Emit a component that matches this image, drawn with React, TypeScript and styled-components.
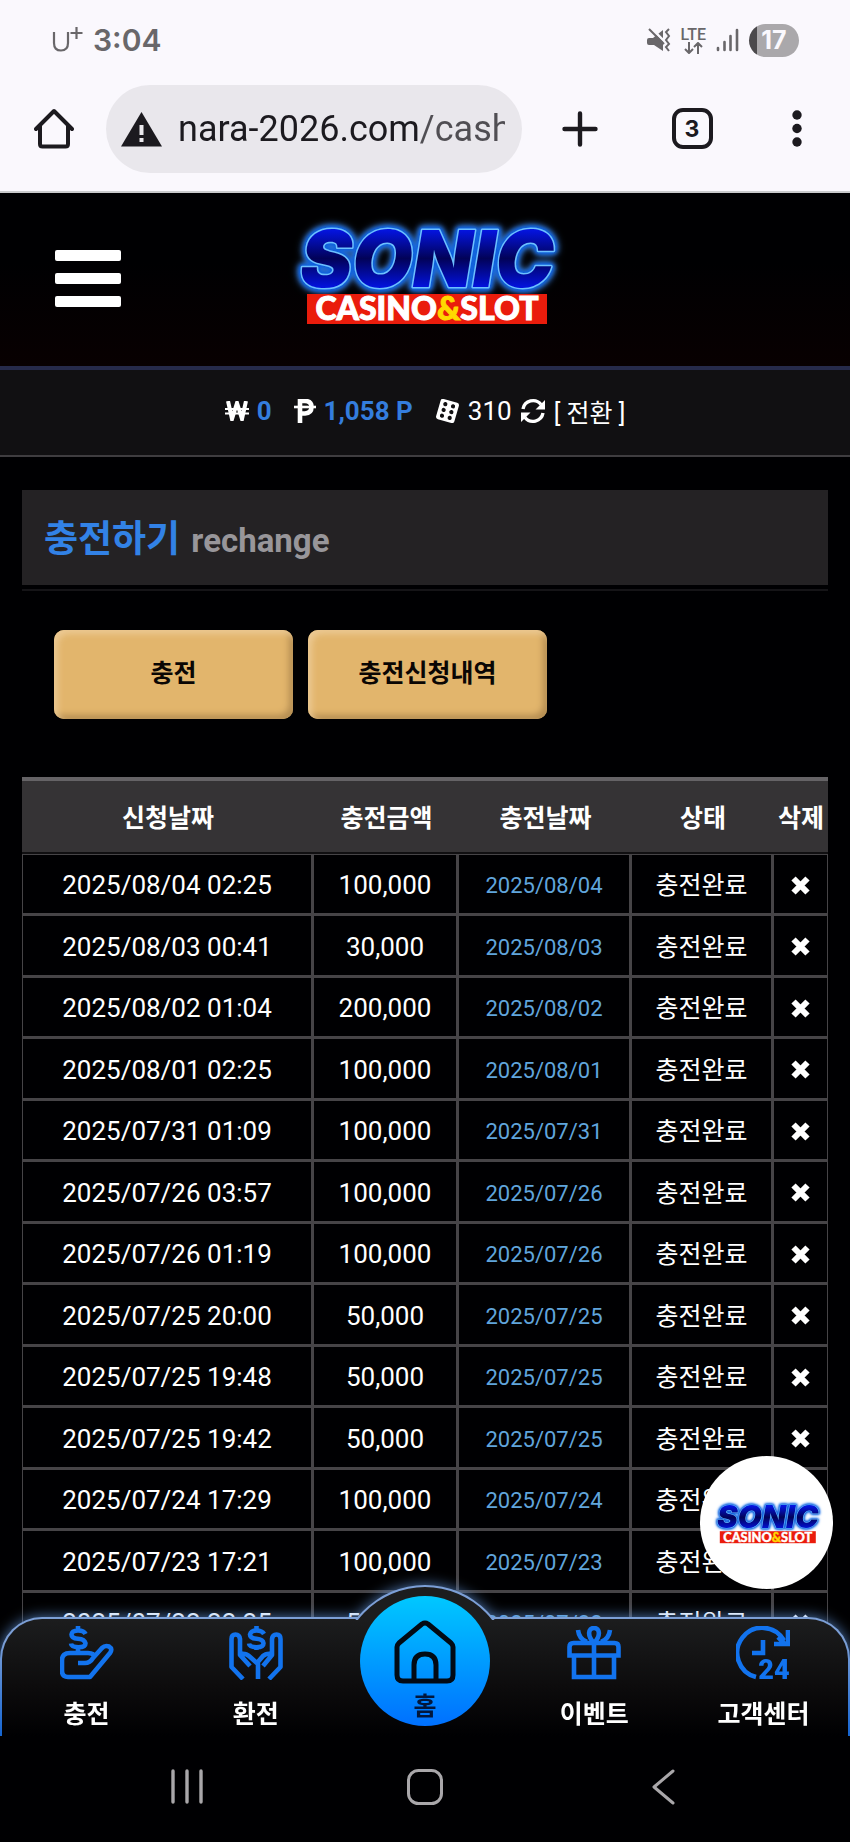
import React from "react";
import styled, { createGlobalStyle } from "styled-components";

const GlobalStyle = createGlobalStyle`
  * { box-sizing: border-box; }
  body {
    margin: 0;
    background: #000002;
    color: #fff;
    font-family: Roboto, "Noto Sans CJK KR", sans-serif;
  }
  button {
    border: 0;
    padding: 0;
    background: none;
    color: inherit;
    font-family: inherit;
    cursor: pointer;
  }
  a { color: inherit; text-decoration: none; }
  svg { display: block; }
`;

const Screen = styled.div`
  display: grid;
  grid-template-columns: minmax(0, 1fr);
  grid-template-rows: auto minmax(0, 1fr) auto;
  height: 100vh;
`;

/* Browser chrome */

const BrowserTop = styled.header`
  background: #faf8fd;
  border-bottom: 2px solid #c9cacc;
`;

const StatusBar = styled.div`
  display: flex;
  align-items: center;
  justify-content: space-between;
  height: 80px;
  padding: 0 51px 0 52px;
  color: #69676a;
`;

const StatusGroup = styled.div`
  display: flex;
  align-items: center;
  gap: 10px;
`;

const Clock = styled.span`
  font: 600 30px/36px Inter, sans-serif;
`;

const Network = styled.span`
  display: grid;
  justify-items: center;
  font: 500 16px/15px Roboto, sans-serif;
`;

const Battery = styled.span`
  width: 50px;
  height: 33px;
  border-radius: 17px;
  background: linear-gradient(90deg, #4b494c 8px, #aaa8ab 8px);
  color: #faf8fd;
  font: 700 25px/33px Inter, sans-serif;
  text-align: center;
`;

const Toolbar = styled.div`
  display: flex;
  align-items: center;
  height: 111px;
  padding: 0 26px 14px 34px;
  color: #1c1a1f;
`;

const AddressBar = styled.label`
  display: flex;
  flex: 1;
  align-items: center;
  gap: 16px;
  min-width: 0;
  height: 88px;
  margin: 0 40px 0 32px;
  padding: 0 17px 0 15px;
  border-radius: 44px;
  background: #e9e7ec;
`;

const Address = styled.input`
  flex: 1;
  min-width: 0;
  padding: 0;
  border: 0;
  outline: 0;
  font: 400 36px/44px Roboto, sans-serif;
  background: linear-gradient(90deg, #1c1a1f 242px, #504e53 242px);
  background-clip: text;
  -webkit-text-fill-color: transparent;
`;

const ToolButtons = styled.div`
  display: flex;
  align-items: center;
  justify-content: space-between;
  width: 262px;
`;

const TabCount = styled.button`
  width: 41px;
  height: 41px;
  margin-left: 16px;
  border: 4px solid #1c1a1f;
  border-radius: 11px;
  font: 700 23px/32px Inter, sans-serif;
`;

const IconButton = styled.button`
  display: grid;
  place-items: center;
`;

const MoreButton = styled(IconButton)`
  padding: 0 22px;
`;

/* Site */

const Site = styled.div`
  position: relative;
  overflow: hidden;
`;

const SiteHeader = styled.div`
  display: grid;
  grid-template-columns: 1fr auto 1fr;
  align-items: center;
  height: 177px;
  padding: 0 55px;
  border-bottom: 4px solid #262a4a;
  background: linear-gradient(#000002 40%, #080001);
`;

const Burger = styled.button`
  display: grid;
  gap: 12px;
  width: 66px;
  margin-top: -2px;

  i {
    height: 11px;
    border-radius: 2px;
    background: #fff;
  }
`;

const LogoLink = styled.a`
  margin-top: -15px;
`;

const LogoName = styled.text<{ $glow: string }>`
  font: italic 900 78px Inter, sans-serif;
  fill: url(#logoFill);
  stroke: #6cc0ff;
  stroke-width: 3px;
  stroke-linejoin: round;
  paint-order: stroke;
  text-anchor: middle;
  filter: drop-shadow(0 0 1px #0d5fdc) drop-shadow(0 0 2px #0d5fdc)
    drop-shadow(0 0 2px #0d5fdc) drop-shadow(0 0 3px ${(p) => p.$glow});
`;

const LogoTag = styled.text`
  font: 900 32px Lato, sans-serif;
  fill: #fff;
  stroke: #fff;
  stroke-width: 1px;
  text-anchor: middle;

  tspan {
    fill: #ffd800;
    stroke: #ffd800;
  }
`;

const InfoBar = styled.div`
  display: flex;
  align-items: center;
  justify-content: center;
  gap: 22px;
  height: 87px;
  padding-bottom: 3px;
  border-bottom: 2px solid #3f3d40;
  background: #111012;
  font-size: 26px;
`;

const InfoItem = styled.span`
  display: flex;
  align-items: center;
  gap: 8px;

  b {
    color: #347ddd;
    font-weight: 700;
  }
  button {
    font-size: 25px;
  }
`;

const Content = styled.main`
  padding: 33px 22px 0;
`;

const TitleBox = styled.div`
  padding-bottom: 4px;
  border-bottom: 2px solid #151417;
`;

const Title = styled.h1`
  height: 95px;
  margin: 0;
  padding: 2px 22px 0;
  background: #242224;
  color: #3282e6;
  font-size: 37px;
  font-weight: 700;
  line-height: 95px;

  small {
    margin-left: 2px;
    color: #98969a;
    font-size: 33px;
    font-weight: 700;
  }
`;

const Actions = styled.div`
  display: flex;
  gap: 15px;
  padding: 39px 32px 58px;
`;

const GoldButton = styled.button`
  width: 239px;
  height: 89px;
  padding-bottom: 8px;
  border-radius: 10px;
  background: #e2b56c;
  box-shadow: inset 4px 4px 6px #ecc993, inset -4px -4px 6px #b48d52;
  color: #0a0604;
  font-size: 25px;
  font-weight: 700;
`;

const History = styled.table`
  width: 100%;
  table-layout: fixed;
  border-collapse: separate;
  border-spacing: 0;
  text-align: center;

  th {
    height: 78px;
    padding: 0 0 4px;
    border-top: 4px solid #656366;
    border-bottom: 1px solid #464447;
    background: linear-gradient(#353335 71px, #100f11 71px);
    font-size: 25px;
    font-weight: 700;
    white-space: nowrap;
  }
  td {
    height: 61px;
    padding: 2px 0 0;
    border-right: 3px solid #464447;
    border-bottom: 3px solid #464447;
    font-size: 26px;
    line-height: 32px;
    white-space: nowrap;
  }
  tr:nth-child(even) td { height: 62px; }
  td:first-child { border-left: 1px solid #464447; }
  td:last-child { border-right-width: 1px; }
`;

const Col = styled.col<{ $w?: number }>`
  width: ${(p) => (p.$w ? `${p.$w}px` : "auto")};
`;

const PaidDate = styled.td`
  && {
    padding-top: 4px;
    color: #60a5dc;
    font-size: 22px;
  }
`;

const State = styled.td`
  && {
    padding-top: 4px;
    font-size: 25px;
  }
`;

const DeleteButton = styled(IconButton)`
  margin: 0 auto;
`;

const Floating = styled.a`
  position: absolute;
  right: 17px;
  bottom: 147px;
  display: grid;
  place-items: center;
  width: 133px;
  height: 133px;
  border-radius: 50%;
  background: #fff;
`;

const Dock = styled.nav`
  position: absolute;
  left: 0;
  right: 0;
  bottom: 0;
  height: 119px;
  filter: drop-shadow(0 0 7px rgba(105, 160, 235, 0.75));
`;

const DockBar = styled.div`
  display: grid;
  grid-template-columns: repeat(5, 1fr);
  height: 119px;
  border: 2px solid transparent;
  border-bottom: 0;
  border-radius: 42px 42px 0 0;
  background:
    linear-gradient(#1c1d1e, #0c0b0c 60%, #000002) padding-box,
    linear-gradient(#7c9fd6 20%, #1565d2) border-box;
`;

const Hump = styled.div`
  position: absolute;
  left: 50%;
  top: -32px;
  width: 176px;
  height: 35px;
  margin-left: -88px;
  overflow: hidden;

  &::before {
    content: "";
    display: block;
    height: 176px;
    border: 2px solid #7c9fd6;
    border-radius: 50%;
    background: #1c1d1e;
  }
`;

const DockLink = styled.a`
  display: flex;
  flex-direction: column;
  align-items: center;
  gap: 18px;
  padding-top: 7px;
  color: #fff;
  font-size: 25px;
  font-weight: 700;
  line-height: 34px;
  white-space: nowrap;

  svg { color: #1273ee; }
`;

const HomeLink = styled.a`
  position: absolute;
  left: 50%;
  top: -21px;
  display: flex;
  flex-direction: column;
  align-items: center;
  gap: 6px;
  width: 130px;
  height: 130px;
  margin-left: -65px;
  padding-top: 24px;
  border-radius: 50%;
  background: linear-gradient(#00c8ff, #0070ff);
  color: #02173c;
  font-size: 25px;
  font-weight: 700;
  line-height: 34px;

  svg { color: #020a14; }
`;

const SystemNav = styled.div`
  display: grid;
  grid-template-columns: repeat(3, 1fr);
  place-items: center;
  height: 106px;
  padding: 0 8% 4px;
  background: #000002;
  color: #a9a7aa;
`;

/* Drawings */

const Logo = ({ width, glow }: { width: number; glow: string }) => (
  <svg width={width} viewBox="0 0 300 112" role="img" aria-label="SONIC CASINO&SLOT">
    <defs>
      <linearGradient id="logoFill" x1="0" y1="0" x2="0" y2="1">
        <stop offset="0.2" stopColor="#0414e0" />
        <stop offset="0.5" stopColor="#020258" />
        <stop offset="0.8" stopColor="#0212dc" />
      </linearGradient>
    </defs>
    <LogoName $glow={glow} x="152" y="71">SONIC</LogoName>
    <rect x="32" y="78" width="240" height="30" fill="#ea1c0c" />
    <LogoTag x="152" y="104">CASINO<tspan>&amp;</tspan>SLOT</LogoTag>
  </svg>
);

const stroke = {
  fill: "none",
  stroke: "currentColor",
  strokeLinejoin: "round" as const,
};

const HomeOutline = () => (
  <svg width="40" height="41" viewBox="0 0 40 41" {...stroke} strokeWidth="4">
    <path d="M2 21 20 3l18 18" strokeLinecap="round" />
    <path d="M6 18v18q0 2.500 2.500 2.500h23q2.500 0 2.500-2.500V18" />
  </svg>
);

const Warning = () => (
  <svg width="41" height="36" viewBox="0 0 41 36">
    <path d="M20.500 1 41 35.500H0z" fill="#1c1a1f" />
    <path d="M18.500 14h4v10h-4zM18.500 27h4v4h-4z" fill="#e9e7ec" />
  </svg>
);

const Muted = () => (
  <svg width="24" height="24" viewBox="0 0 24 24">
    <path d="M0 12q0-2 2-2h4l10-8v21l-9-6H2q-2 0-2-2z" fill="currentColor" />
    <path d="M4 0l18 18" fill="none" stroke="#faf8fd" strokeWidth="2.500" />
    <path d="M2 1l15 15M22 1l-3 3 3 4-3 4 3 4-3 3 3 4" fill="none" stroke="currentColor" strokeWidth="2" />
  </svg>
);

const DataArrows = () => (
  <svg width="20" height="12" viewBox="0 0 20 12" {...stroke} strokeWidth="2">
    <path d="M6 0v11M2 7l4 4 4-4M15 12V1M11 5l4-4 4 4" />
  </svg>
);

const Signal = () => (
  <svg width="23" height="24" viewBox="0 0 23 24" {...stroke} strokeWidth="2.600" strokeLinecap="round">
    <path d="M2 20v2M8.500 14v8M14.500 8v14M21 2v20" />
  </svg>
);

const Plus = () => (
  <svg width="36" height="36" viewBox="0 0 36 36" {...stroke} strokeWidth="4.400" strokeLinecap="round">
    <path d="M18 2.500v31M2.500 18h31" />
  </svg>
);

const Dots = () => (
  <svg width="10" height="37" viewBox="0 0 10 37" fill="currentColor">
    <circle cx="5" cy="5" r="4.700" />
    <circle cx="5" cy="18.500" r="4.700" />
    <circle cx="5" cy="32" r="4.700" />
  </svg>
);

const Won = () => (
  <svg width="24" height="20" viewBox="0 0 24 20" {...stroke} strokeWidth="4" strokeLinejoin="miter">
    <path d="m3 0 4 18L12 2l5 16 4-18" />
    <path d="M0 8h24M0 12.500h24" strokeWidth="1.800" />
  </svg>
);

const Point = () => (
  <svg width="22" height="24" viewBox="0 0 22 24" {...stroke}>
    <path d="M6 24V2h5q6.500 0 6.500 6T11 14.500H6" strokeWidth="4.600" strokeLinejoin="miter" />
    <path d="M0 8h22" strokeWidth="2.600" />
  </svg>
);

const Dice = () => (
  <svg width="25" height="24" viewBox="0 0 25 24">
    <g transform="rotate(16 12.500 12)">
      <rect x="3" y="1.500" width="19" height="21" rx="2.500" fill="#fff" />
      {[6, 12, 18].map((y) => (
        <g key={y} fill="#111012">
          <circle cx="8.500" cy={y} r="2.100" />
          <circle cx="16.500" cy={y} r="2.100" />
        </g>
      ))}
    </g>
  </svg>
);

const Refresh = () => (
  <svg width="26" height="26" viewBox="0 0 26 26">
    <path d="M3 11A10.200 10.200 0 0 1 21 6.500M23 15a10.200 10.200 0 0 1-18 4.500" fill="none" stroke="#fff" strokeWidth="3.400" />
    <path d="M25 2v9.500h-9.500zM1 24v-9.500h9.500z" fill="#fff" />
  </svg>
);

const Cross = () => (
  <svg width="19" height="19" viewBox="0 0 19 19" {...stroke} strokeWidth="6">
    <path d="m2.500 2.500 14 14M16.500 2.500l-14 14" />
  </svg>
);

const Deposit = () => (
  <svg width="54" height="54" viewBox="0 0 54 54" {...stroke} strokeWidth="4.600">
    <path d="M25.500 8Q24 4.500 18 4.500t-6.500 4Q11.500 12.300 18 12.800t7.500 4.400q0 4-7 4T11 17.500M18 0v4.500M18 21v5" />
    <path d="M34 31q0-4-6-4H10q-8 0-8 7v11q0 6 6 6h22l20-24q3-4-1-6.500-4-1.500-7 1.500l-9 10q-3 5-8 5h-7" />
  </svg>
);

const Withdraw = () => (
  <svg width="54" height="54" viewBox="0 0 54 54" {...stroke} strokeWidth="4.600">
    <path d="M35 8Q33 4.500 27.500 4.500T21 8.500q0 3.800 6.500 4.300t7 4.400q0 4-7 4T20 17.500M27.500 0v4.500M27.500 21v3" />
    <path d="M14 53 2.500 41V13q0-4.500 4-4.500t4.500 4.500v16l10 11M11 28q6-1 9 2l9 8v15" />
    <path d="m40 53 11.500-12V13q0-4.500-4-4.500T43 13v16L34 40M43 28q-6-1-9 2l-6 7" />
  </svg>
);

const Gift = () => (
  <svg width="54" height="54" viewBox="0 0 54 54" {...stroke} strokeWidth="4.600" strokeLinejoin="miter">
    <path d="M2.500 29.500V21q0-4 4-4h41q4 0 4 4v8.500zM7 29.500h40v21.500H7zM27 17v34" />
    <path d="M27 17c-7-7-6-15 0-15s7 8 0 15M11 4q1 9 9 12M43 4q-1 9-9 12" />
  </svg>
);

const Support = () => (
  <svg width="54" height="54" viewBox="0 0 54 54" {...stroke} strokeWidth="4.600" strokeLinejoin="miter">
    <path d="M20 51A25 25 0 1 1 48 14.500" />
    <path d="M52 4v14H38M48 17l-6-6M27 14v13H16" />
    <text x="38" y="53" fill="currentColor" stroke="none" fontFamily="Roboto, sans-serif" fontWeight="900" fontSize="27" textAnchor="middle">24</text>
  </svg>
);

const House = () => (
  <svg width="62" height="64" viewBox="0 0 62 64" {...stroke} strokeWidth="5">
    <path d="M3 55V27q0-2 2-4L28 4q3-2 6 0l23 19q2 2 2 4v28q0 6-6 6H9q-6 0-6-6z" />
    <path d="M20 61V45q0-11 11-11t11 11v16" />
  </svg>
);

const Recents = () => (
  <svg width="34" height="36" viewBox="0 0 34 36" {...stroke} strokeWidth="3.400" strokeLinecap="round">
    <path d="M3 2v31M17 2v31M31 2v31" />
  </svg>
);

const SystemHome = () => (
  <svg width="36" height="36" viewBox="0 0 36 36" {...stroke} strokeWidth="3">
    <rect x="1.500" y="1.500" width="33" height="33" rx="10" />
  </svg>
);

const Back = () => (
  <svg width="24" height="36" viewBox="0 0 24 36" {...stroke} strokeWidth="3" strokeLinecap="round">
    <path d="M22 2 3 18l19 16" />
  </svg>
);

const rows: [string, string, string][] = [
  ["2025/08/04", "02:25", "100,000"],
  ["2025/08/03", "00:41", "30,000"],
  ["2025/08/02", "01:04", "200,000"],
  ["2025/08/01", "02:25", "100,000"],
  ["2025/07/31", "01:09", "100,000"],
  ["2025/07/26", "03:57", "100,000"],
  ["2025/07/26", "01:19", "100,000"],
  ["2025/07/25", "20:00", "50,000"],
  ["2025/07/25", "19:48", "50,000"],
  ["2025/07/25", "19:42", "50,000"],
  ["2025/07/24", "17:29", "100,000"],
  ["2025/07/23", "17:21", "100,000"],
  ["2025/07/22", "22:25", "50,000"],
];

export default function App() {
  return (
    <Screen>
      <GlobalStyle />
      <BrowserTop>
        <StatusBar>
          <StatusGroup>
            <svg width="31" height="26" viewBox="0 0 31 26" {...stroke} strokeWidth="2.200" aria-label="U+">
              <path d="M2 5v11q0 7.500 7 7.500t7-7.500V5M24.500 0v12M18.500 6h12" />
            </svg>
            <Clock>3:04</Clock>
          </StatusGroup>
          <StatusGroup>
            <Muted />
            <Network>
              LTE
              <DataArrows />
            </Network>
            <Signal />
            <Battery>17</Battery>
          </StatusGroup>
        </StatusBar>
        <Toolbar>
          <IconButton aria-label="Home"><HomeOutline /></IconButton>
          <AddressBar>
            <Warning />
            <Address aria-label="Address" defaultValue="nara-2026.com/cash" />
          </AddressBar>
          <ToolButtons>
            <IconButton aria-label="New tab"><Plus /></IconButton>
            <TabCount aria-label="Tabs">3</TabCount>
            <MoreButton aria-label="Menu"><Dots /></MoreButton>
          </ToolButtons>
        </Toolbar>
      </BrowserTop>

      <Site>
        <SiteHeader>
          <Burger aria-label="메뉴"><i /><i /><i /></Burger>
          <LogoLink href="#"><Logo width={300} glow="#4a90e8" /></LogoLink>
        </SiteHeader>
        <InfoBar>
          <InfoItem><Won /><b>0</b></InfoItem>
          <InfoItem><Point /><b>1,058 P</b></InfoItem>
          <InfoItem><Dice />310<Refresh /><button>[ 전환 ]</button></InfoItem>
        </InfoBar>
        <Content>
          <TitleBox>
            <Title>충전하기 <small>rechange</small></Title>
          </TitleBox>
          <Actions>
            <GoldButton>충전</GoldButton>
            <GoldButton>충전신청내역</GoldButton>
          </Actions>
          <History>
            <colgroup>
              <Col /><Col $w={145} /><Col $w={173} /><Col $w={142} /><Col $w={54} />
            </colgroup>
            <thead>
              <tr><th>신청날짜</th><th>충전금액</th><th>충전날짜</th><th>상태</th><th>삭제</th></tr>
            </thead>
            <tbody>
              {rows.map(([date, time, amount]) => (
                <tr key={date + time}>
                  <td>{date} {time}</td>
                  <td>{amount}</td>
                  <PaidDate>{date}</PaidDate>
                  <State>충전완료</State>
                  <td><DeleteButton aria-label="삭제"><Cross /></DeleteButton></td>
                </tr>
              ))}
            </tbody>
          </History>
        </Content>

        <Floating href="#"><Logo width={120} glow="#8cc0ff" /></Floating>
        <Dock>
          <DockBar>
            <DockLink href="#"><Deposit />충전</DockLink>
            <DockLink href="#"><Withdraw />환전</DockLink>
            <span />
            <DockLink href="#"><Gift />이벤트</DockLink>
            <DockLink href="#"><Support />고객센터</DockLink>
          </DockBar>
          <Hump />
          <HomeLink href="#"><House />홈</HomeLink>
        </Dock>
      </Site>

      <SystemNav>
        <IconButton aria-label="Recents"><Recents /></IconButton>
        <IconButton aria-label="Home"><SystemHome /></IconButton>
        <IconButton aria-label="Back"><Back /></IconButton>
      </SystemNav>
    </Screen>
  );
}
